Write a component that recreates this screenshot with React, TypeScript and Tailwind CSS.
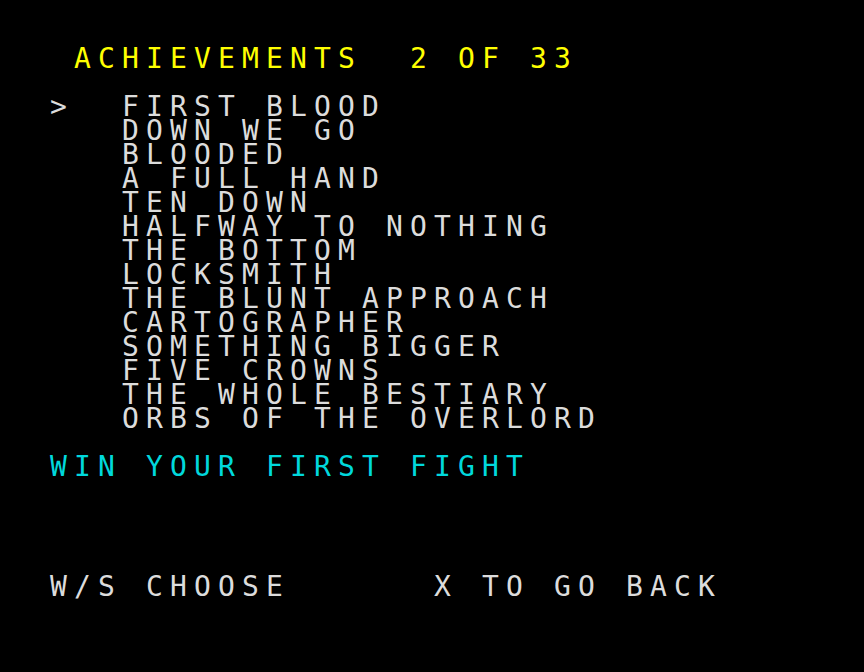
const items = [
  'FIRST BLOOD',
  'DOWN WE GO',
  'BLOODED',
  'A FULL HAND',
  'TEN DOWN',
  'HALFWAY TO NOTHING',
  'THE BOTTOM',
  'LOCKSMITH',
  'THE BLUNT APPROACH',
  'CARTOGRAPHER',
  'SOMETHING BIGGER',
  'FIVE CROWNS',
  'THE WHOLE BESTIARY',
  'ORBS OF THE OVERLORD',
];

const selected = 0;

export default function App() {
  return (
    <div className="w-[864px] h-[672px] bg-black overflow-hidden">
      <div
        className="pt-[47px] pl-[50px] text-[28px] leading-[24px] whitespace-pre tracking-[calc(24px-1ch)] text-[#dcdcdc]"
        style={{ fontFamily: '"DejaVu Sans Mono", monospace' }}
      >
        <div className="text-[#ffff00]">{' ACHIEVEMENTS  2 OF 33'}</div>
        <div>{' '}</div>
        {items.map((name, i) => (
          <div key={name}>{(i === selected ? '>  ' : '   ') + name}</div>
        ))}
        <div>{' '}</div>
        <div className="text-[#00d8dc]">WIN YOUR FIRST FIGHT</div>
        <div>{' '}</div>
        <div>{' '}</div>
        <div>{' '}</div>
        <div>{' '}</div>
        <div>{'W/S CHOOSE      X TO GO BACK'}</div>
      </div>
    </div>
  );
}
